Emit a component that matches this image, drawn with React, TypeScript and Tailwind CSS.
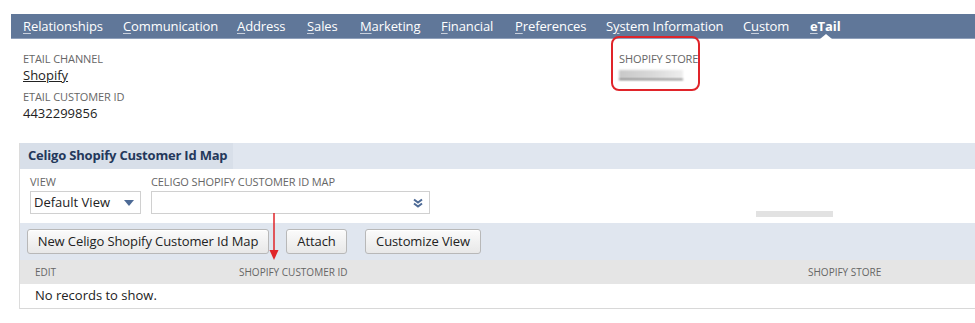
const tabs: { label: string; ak: number; w: string; active?: boolean }[] = [
  { label: "Relationships", ak: 0, w: "w-[100px]" },
  { label: "Communication", ak: 0, w: "w-[114px]" },
  { label: "Address", ak: 0, w: "w-[70px]" },
  { label: "Sales", ak: 0, w: "w-[53px]" },
  { label: "Marketing", ak: 0, w: "w-[81px]" },
  { label: "Financial", ak: 0, w: "w-[74px]" },
  { label: "Preferences", ak: 0, w: "w-[91px]" },
  { label: "System Information", ak: 1, w: "w-[137px]" },
  { label: "Custom", ak: 1, w: "w-[67px]" },
  { label: "eTail", ak: 0, w: "w-[60px]", active: true },
];

function Tab({ label, ak, w, active }: { label: string; ak: number; w: string; active?: boolean }) {
  return (
    <div className={`${w} relative h-full flex items-center pt-[2px] shrink-0 whitespace-nowrap`}>
      <span className={active ? "font-bold text-white" : "text-white"}>
        {label.slice(0, ak)}
        <span className="underline underline-offset-2 decoration-[#c8d0dd]">{label[ak]}</span>
        {label.slice(ak + 1)}
      </span>
      {active && (
        <div className="absolute -bottom-px left-[10px] w-0 h-0 border-l-[6px] border-r-[6px] border-b-[5px] border-l-transparent border-r-transparent border-b-white" />
      )}
    </div>
  );
}

function Field({ label, children }: { label: string; children: React.ReactNode }) {
  return (
    <div className="flex flex-col">
      <span className="text-[11px] leading-[14px] text-[#666] uppercase tracking-[-0.1px]">{label}</span>
      <div className="text-[13px] leading-[18px] text-[#222]">{children}</div>
    </div>
  );
}

function Btn({ children, w, cls = "" }: { children: React.ReactNode; w: string; cls?: string }) {
  return (
    <button className={`${w} ${cls} h-[25px] rounded-[3px] border border-[#b8b8b8] bg-gradient-to-b from-[#fbfbfb] to-[#e8e8e8] text-[13px] tracking-[-0.1px] text-[#222] leading-none whitespace-nowrap shadow-[inset_0_1px_0_#fff]`}>
      {children}
    </button>
  );
}

export default function App() {
  const tableRows: string[] = [];
  return (
    <div className="w-[975px] h-[323px] bg-white overflow-hidden relative" style={{ fontFamily: '"Open Sans", "Liberation Sans", sans-serif' }}>
      <div className="pt-[14px] pl-[11px]">
        {/* tab strip */}
        <div className="h-[25px] bg-[#607799] border-b border-[#8fa0bb] flex items-center pl-[12px] text-[13px] tracking-[-0.1px]">
          {tabs.map((t) => (
            <Tab key={t.label} {...t} />
          ))}
        </div>

        {/* fields */}
        <div className="flex pl-[12px] pt-[13px] h-[104px]">
          <div className="w-[596px] flex flex-col gap-[6px]">
            <Field label="eTail Channel">
              <span className="underline">Shopify</span>
            </Field>
            <Field label="eTail Customer ID">4432299856</Field>
          </div>
          <div className="relative">
            <Field label="Shopify Store">
              <span className="inline-block w-[64px] h-[10px] mt-[2px] border-b border-[#444] bg-gradient-to-r from-[#c8c8c8] via-[#d8d8d8] to-[#eee] blur-[1px]" />
            </Field>
            <div className="absolute -left-[8px] -top-[16px] w-[89px] h-[55px] rounded-[8px] border-2 border-[#e0242a]" />
          </div>
        </div>

        {/* sublist */}
        <div className="ml-[8px] border-l border-[#dcdcdc]">
          <div className="h-[26px] bg-[#e0e6ef] flex">
            <div className="w-[213px] bg-[#d8dfe9] flex items-center pl-[8px] text-[13px] tracking-[-0.2px] font-bold text-[#24385b] whitespace-nowrap">
              Celigo Shopify Customer Id Map
            </div>
          </div>
          <div className="h-[54px] flex pl-[10px] pt-[6px] gap-[10px] relative">
            <div className="flex flex-col">
              <span className="text-[11px] leading-[14px] text-[#666] uppercase">View</span>
              <div className="mt-[2px] w-[111px] h-[23px] border border-[#d0d0d0] flex items-center justify-between pl-[3px] pr-[6px] text-[13px] text-[#222]">
                Default View
                <svg width="10" height="6" viewBox="0 0 10 6">
                  <path d="M0 0h10L5 6z" fill="#4d6a96" />
                </svg>
              </div>
            </div>
            <div className="flex flex-col">
              <span className="text-[11px] leading-[14px] text-[#666] uppercase tracking-[-0.1px]">Celigo Shopify Customer Id Map</span>
              <div className="mt-[2px] w-[279px] h-[23px] border border-[#d0d0d0] flex items-center justify-end pr-[6px]">
                <svg width="10" height="10" viewBox="0 0 10 10">
                  <path d="M1 1.5l4 3 4-3M1 5.5l4 3 4-3" stroke="#4d6a96" strokeWidth="2" fill="none" />
                </svg>
              </div>
            </div>
            <div className="absolute left-[736px] top-[42px] w-[77px] h-[6px] bg-[#e2e2e2]" />
          </div>
          <div className="h-[37px] bg-[#e0e6ef] flex items-center pl-[7px]">
            <Btn w="w-[242px]">New Celigo Shopify Customer Id Map</Btn>
            <Btn w="w-[61px]" cls="ml-[17px]">Attach</Btn>
            <Btn w="w-[116px]" cls="ml-[18px]">Customize View</Btn>
          </div>
          <div className="h-[24px] bg-[#e5e5e5] flex items-center text-[10px] text-[#666] uppercase">
            <span className="w-[219px] pl-[15px]">Edit</span>
            <span className="w-[569px]">Shopify Customer ID</span>
            <span>Shopify Store</span>
          </div>
          <div className="h-[25px] flex items-center pl-[15px] text-[13px] text-[#222] border-b border-[#d8d8d8]">
            {tableRows.length === 0 ? "No records to show." : null}
          </div>
        </div>
      </div>

      {/* annotation arrow */}
      <svg className="absolute left-[268px] top-[213px]" width="12" height="48" viewBox="0 0 12 48">
        <line x1="6" y1="0" x2="6" y2="40" stroke="#e0242a" strokeWidth="1.5" />
        <path d="M1.5 37L6 47l4.5-10z" fill="#e0242a" />
      </svg>
    </div>
  );
}
